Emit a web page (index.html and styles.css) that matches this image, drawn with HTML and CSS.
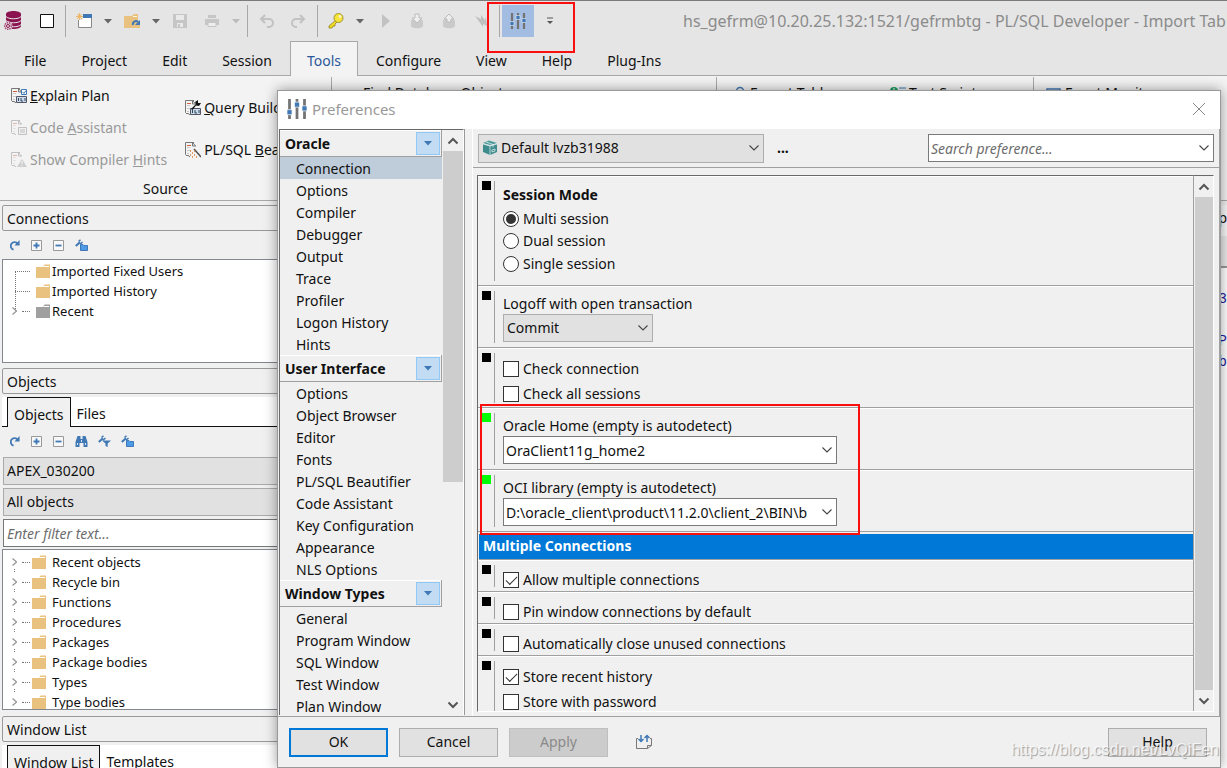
FILE: index.html
```html
<!DOCTYPE html>
<html lang="en">
<head>
<meta charset="utf-8">
<title>PL/SQL Developer - Preferences</title>
<link rel="stylesheet" href="styles.css">
</head>
<body>
<svg class="defs" aria-hidden="true">
  <symbol id="chev" viewBox="0 0 12 8"><path d="M1.500 1.500L6 6l4.500-4.500" fill="none" stroke="#444" stroke-width="1.100"/></symbol>
  <symbol id="up" viewBox="0 0 12 8"><path d="M1.500 6.500L6 2l4.500 4.500" fill="none" stroke="#555" stroke-width="2"/></symbol>
  <symbol id="down" viewBox="0 0 12 8"><path d="M1.500 1.500L6 6l4.500-4.500" fill="none" stroke="#555" stroke-width="2"/></symbol>
  <symbol id="tri" viewBox="0 0 8 5"><path d="M0 0h8L4 4.500z" fill="currentColor"/></symbol>
  <symbol id="exp" viewBox="0 0 5 20"><path d="M.5 6.500L4.500 10l-4 3.500" fill="none" stroke="#999" stroke-width="1.300"/><path d="M2 17h1v1H2zM2 19h1v1H2z" fill="#777"/></symbol>
  <symbol id="folder" viewBox="0 0 14 14"><path d="M0 3h7l1.500-2.500H14V14H0z" fill="currentColor"/><path d="M7.500 2.500H13" stroke="#fff" fill="none"/></symbol>
  <symbol id="refresh" viewBox="0 0 12 12"><path d="M5 10.500A4.200 4.200 0 1 1 9.500 4" fill="none" stroke="#3f78b4" stroke-width="2"/><path d="M11.500 0v6H6z" fill="#3f78b4"/></symbol>
  <symbol id="plus" viewBox="0 0 11 11"><path d="M.5.5h10v10H.5z" fill="#f8f8f8" stroke="#999"/><path d="M2.500 5.500h6M5.500 2.500v6" stroke="#3f78b4" stroke-width="1.800"/></symbol>
  <symbol id="minus" viewBox="0 0 11 11"><path d="M.5.5h10v10H.5z" fill="#f8f8f8" stroke="#999"/><path d="M2.500 5.500h6" stroke="#3f78b4" stroke-width="1.800"/></symbol>
  <symbol id="wfolder" viewBox="0 0 13 12"><path d="M.8 7L5 3.200" stroke="#3f78b4" stroke-width="2"/><path d="M3.500 2.500L5.500.7M7.500 3L5 5.200" stroke="#3f78b4" stroke-width="1.500"/><path d="M5.500 5.500h2.500l1 1h3.500v5h-7z" fill="#4d9be6" stroke="#3f78b4"/></symbol>
  <symbol id="wfilter" viewBox="0 0 13 12"><path d="M.8 7L5 3.200" stroke="#3f78b4" stroke-width="2"/><path d="M3.500 2.500L5.500.7M7.500 3L5 5.200" stroke="#3f78b4" stroke-width="1.500"/><path d="M4 5.500h9L9.700 8.500V12L7.500 11V8.500z" fill="#3f78b4"/></symbol>
  <symbol id="binoc" viewBox="0 0 12 12"><path d="M2 1h3v3h2V1h3l2 6v5H8V8H4v4H0V7z" fill="#3f78b4"/><path d="M2 8v2M10 8v2M6 5v2" stroke="#dbe7f3"/></symbol>
  <symbol id="sliders" viewBox="0 0 16 16"><path d="M2 0v16M8 0v16M14 0v16" stroke="#737373" stroke-width="2.200"/><path d="M0 8.500h4v4H0zM6 2.500h4v4H6zM12 5.500h4v4h-4z" fill="#3f78b4" stroke="#eef3f8" stroke-width=".6"/></symbol>
  <symbol id="doc" viewBox="0 0 16 16"><path d="M9 .5H.5v12L2 14l1-1 1 1.500h1M7.500.5l3 3.500M7.500.5V4H11" fill="none" stroke="#777"/><path d="M2 5.500h3M2 8.500h3M2 11.500h2" stroke="#c8c8c8"/><path d="M2 3.500h4" stroke="#d06040"/></symbol>
</svg>

<div class="app">
  <header class="quickbar">
    <svg class="i18" viewBox="0 0 18 20"><path d="M3 3c0-4 15-4 15 0v12c0 4-15 4-15 0z" fill="#8b1450"/><path d="M3 5.500c2 3 13 3 15 0M3 9.500c2 3 13 3 15 0M3 13.500c2 3 13 3 15 0" stroke="#e4e4e4" fill="none"/><circle cx="5" cy="15" r="4.500" fill="#e4e4e4"/><circle cx="5" cy="15" r="3.300" fill="none" stroke="#a84877" stroke-width="1.500" stroke-dasharray="1.500 .8"/><circle cx="5" cy="15" r="1.500" fill="none" stroke="#8b1450"/></svg>
    <svg class="i14 square" viewBox="0 0 14 14"><path d="M.5.5h13v13H.5z" fill="#fff" stroke="#111"/></svg>
    <i class="vsep"></i>
    <svg class="i16" viewBox="0 0 16 16"><path d="M2.500 2.500h13v12h-13z" fill="#fff" stroke="#888"/><path d="M7 1h9v4H7z" fill="#3f78b4"/><path d="M0 0h7v7H0z" fill="#e5e5e5"/><path d="M3.500 0v7M0 3.500h7M1 1l5 5M6 1L1 6" stroke="#e9b765"/></svg>
    <svg class="tri dk" viewBox="0 0 8 5"><use href="#tri"/></svg>
    <svg class="i16" viewBox="0 0 16 16"><path d="M0 3h8l2-2h4v14H0z" fill="#e9c27f"/><path d="M9 3.500h4" stroke="#fff4dd"/><path d="M8 8h8v7H8z" fill="#e9c27f"/><path d="M9 12a3 3 0 0 1 5-3" stroke="#3f78b4" stroke-width="2" fill="none"/><path d="M16 7v5h-5z" fill="#3f78b4"/></svg>
    <svg class="tri dk" viewBox="0 0 8 5"><use href="#tri"/></svg>
    <svg class="i16" viewBox="0 0 16 16"><path d="M1 1h14v14H1z" fill="#c6c6c6"/><path d="M4 2h8v5H4zM5 10h6v4H5z" fill="#e9e9e9"/><path d="M6 11h2v3H6z" fill="#c6c6c6"/></svg>
    <svg class="i16" viewBox="0 0 16 16"><path d="M4 2h8v3H4zM1 6h14v6H1z" fill="#c6c6c6"/><path d="M4 9.500h8v4H4z" fill="#eee" stroke="#c6c6c6"/></svg>
    <svg class="tri lt" viewBox="0 0 8 5"><use href="#tri"/></svg>
    <i class="vsep"></i>
    <svg class="i16" viewBox="0 0 16 16"><path d="M9 14h2a4 4 0 0 0 0-8H4M7 2L3 6l4 4" fill="none" stroke="#c2c2c2" stroke-width="2"/></svg>
    <svg class="i16" viewBox="0 0 16 16"><path d="M7 14H6a4 4 0 0 1 0-8h7M10 2l4 4-4 4" fill="none" stroke="#c2c2c2" stroke-width="2"/></svg>
    <i class="vsep"></i>
    <svg class="i16" viewBox="0 0 16 16"><path d="M8 7L1 13v2h3l1-2h2v-2l2-2" fill="#f2dc20" stroke="#8d8120" stroke-width=".8"/><circle cx="10.500" cy="5" r="4.500" fill="#f7e53a" stroke="#8d8120" stroke-width=".8"/><circle cx="12" cy="3.500" r="1.400" fill="#f6f3d0"/></svg>
    <svg class="tri dk" viewBox="0 0 8 5"><use href="#tri"/></svg>
    <svg class="i16" viewBox="0 0 16 16"><path d="M6 1l8 7-8 7z" fill="#c2c2c2"/></svg>
    <svg class="i16" viewBox="0 0 16 16"><path d="M3 8c0-3 12-3 12 0v5c0 3-12 3-12 0z" fill="#cacaca"/><path d="M7 1h4v4h3l-5 5-5-5h3z" fill="#eee" stroke="#bbb"/></svg>
    <svg class="i16" viewBox="0 0 16 16"><path d="M3 8c0-3 12-3 12 0v5c0 3-12 3-12 0z" fill="#cacaca"/><path d="M7 9h4V6h3L9 1 4 6h3z" fill="#eee" stroke="#bbb"/></svg>
    <svg class="i16" viewBox="0 0 16 16"><path d="M3 3l6 3V2l4 5 1-3 1 9-4-2v3z" fill="#c0c0c0"/></svg>
    <i class="vsep wide"></i>
    <button class="prefbtn" aria-label="Preferences"><svg class="i16"><use href="#sliders"/></svg></button>
    <svg class="i8" viewBox="0 0 8 8"><path d="M1 1h6" stroke="#555"/><path d="M1 4h6L4 7z" fill="#555"/></svg>
    <h1 class="wintitle">hs_gefrm@10.20.25.132:1521/gefrmbtg - PL/SQL Developer - Import Tables</h1>
    <div class="mark mark-top"></div>
  </header>

  <nav class="tabs">
    <button>File</button><button>Project</button><button>Edit</button><button>Session</button><button class="on">Tools</button><button>Configure</button><button>View</button><button>Help</button><button>Plug-Ins</button>
  </nav>

  <section class="ribbon">
    <div class="rgroup source">
      <div class="rcols">
        <div class="rcol">
          <button><svg class="i16"><use href="#doc"/><path d="M10.500 1.500h5v5h-5z" fill="#fff" stroke="#3f78b4"/><path d="M11.500 4l1.500 1.500 2-3" fill="none" stroke="#3f78b4"/><path d="M5.500 8.500h10v6h-10z" fill="#c9dcee" stroke="#556"/><path d="M7.500 10v3M10 10v3h2M14 10v3" stroke="#345" fill="none"/></svg><span><u>E</u>xplain Plan</span></button>
          <button disabled><svg class="i16"><use href="#doc"/><path d="M7.500 7.500h8v7h-8z" fill="#eee" stroke="#777"/><path d="M9 10h5M9 12h5" stroke="#777"/></svg><span>Code <u>A</u>ssistant</span></button>
          <button disabled><svg class="i16"><use href="#doc"/><path d="M11 7l5 8H6z" fill="#999"/><path d="M11 9v3M11 13v1" stroke="#fff"/></svg><span>Show Compiler <u>H</u>ints</span></button>
        </div>
        <div class="rcol two">
          <button><svg class="i16"><use href="#doc"/><path d="M5.500 8.500h10v6h-10z" fill="#c9dcee" stroke="#556"/><path d="M7.500 10v3M10 10v3h2M14 10v3" stroke="#345" fill="none"/><path d="M6 9l5-5-1-2 3-2v3h3l-2 3-3-.5L7.500 10z" fill="#111"/></svg><span><u>Q</u>uery Builder</span></button>
          <button><svg class="i16"><use href="#doc"/><path d="M9 7l7 8" stroke="#555" stroke-width="1.500"/><path d="M5 13h1M7 11h1M7 15h1M9 13h1M11 15h1M5 9h1M9 9h1" stroke="#e07b2a" stroke-width="1.500"/></svg><span>PL/SQL <u>B</u>eautifier</span></button>
        </div>
      </div>
      <div class="rname">Source</div>
    </div>
    <div class="rgroup find"><button>Find Database Objects</button></div>
    <div class="rgroup tabl">
      <button><svg class="i16" viewBox="0 0 16 16"><circle cx="9" cy="6" r="3.500" fill="none" stroke="#3f78b4" stroke-width="1.500"/></svg><span>Export Tables</span></button>
      <button class="rep"><svg class="i16" viewBox="0 0 16 16"><circle cx="4" cy="6" r="4" fill="#1f9a60"/><path d="M4 3v6" stroke="#fff"/><path d="M9 3h7M9 6h7" stroke="#3f78b4"/></svg><span>Test Scripts</span></button>
    </div>
    <div class="rgroup mon"><button><svg class="i16" viewBox="0 0 16 16"><path d="M1 4h13v9H1z" fill="#fff" stroke="#3f78b4" stroke-width="1.500"/></svg><span>Event Monitor</span></button></div>
  </section>

  <main class="work">
    <aside class="side">
      <h2 class="phead">Connections</h2>
      <div class="ptools">
        <svg class="i11" viewBox="0 0 12 12"><use href="#refresh"/></svg><svg class="i11"><use href="#plus"/></svg><svg class="i11"><use href="#minus"/></svg><svg class="i13"><use href="#wfolder"/></svg>
      </div>
      <ul class="tree conn">
        <li><i class="dots"></i><svg class="i14 fo"><use href="#folder"/></svg>Imported Fixed Users</li>
        <li><i class="dots"></i><svg class="i14 fo"><use href="#folder"/></svg>Imported History</li>
        <li><svg class="exp1" viewBox="0 0 5 8"><path d="M.5.5L4.500 4l-4 3.500" fill="none" stroke="#999" stroke-width="1.300"/></svg><i class="dots s"></i><svg class="i14 gr"><use href="#folder"/></svg>Recent</li>
      </ul>
      <h2 class="phead">Objects</h2>
      <div class="ptabs"><button class="on">Objects</button><button>Files</button></div>
      <div class="ptools">
        <svg class="i11" viewBox="0 0 12 12"><use href="#refresh"/></svg><svg class="i11"><use href="#plus"/></svg><svg class="i11"><use href="#minus"/></svg><svg class="i13"><use href="#binoc"/></svg><svg class="i13 nar"><use href="#wfilter"/></svg><svg class="i13 nar"><use href="#wfolder"/></svg>
      </div>
      <div class="pform">
        <select aria-label="Schema"><option>APEX_030200</option></select>
        <select aria-label="Object filter"><option>All objects</option></select>
        <input type="text" placeholder="Enter filter text..." aria-label="Filter">
      </div>
      <ul class="tree objs">
        <li><svg class="exp"><use href="#exp"/></svg><i class="dots s"></i><svg class="i14 fo"><use href="#folder"/></svg>Recent objects</li>
        <li><svg class="exp"><use href="#exp"/></svg><i class="dots s"></i><svg class="i14 fo"><use href="#folder"/></svg>Recycle bin</li>
        <li><svg class="exp"><use href="#exp"/></svg><i class="dots s"></i><svg class="i14 fo"><use href="#folder"/></svg>Functions</li>
        <li><svg class="exp"><use href="#exp"/></svg><i class="dots s"></i><svg class="i14 fo"><use href="#folder"/></svg>Procedures</li>
        <li><svg class="exp"><use href="#exp"/></svg><i class="dots s"></i><svg class="i14 fo"><use href="#folder"/></svg>Packages</li>
        <li><svg class="exp"><use href="#exp"/></svg><i class="dots s"></i><svg class="i14 fo"><use href="#folder"/></svg>Package bodies</li>
        <li><svg class="exp"><use href="#exp"/></svg><i class="dots s"></i><svg class="i14 fo"><use href="#folder"/></svg>Types</li>
        <li><svg class="exp"><use href="#exp"/></svg><i class="dots s"></i><svg class="i14 fo"><use href="#folder"/></svg>Type bodies</li>
      </ul>
      <h2 class="phead">Window List</h2>
      <div class="ptabs"><button class="on">Window List</button><button>Templates</button></div>
    </aside>
    <div class="editor">
      <div class="ehead">p</div>
      <div class="ebar"></div>
      <pre class="code">3

P
b</pre>
    </div>
  </main>
</div>

<div class="dialog" role="dialog" aria-labelledby="dlg-title">
  <div class="dtitle">
    <svg class="i20" viewBox="0 0 16 16"><use href="#sliders"/></svg>
    <h2 id="dlg-title">Preferences</h2>
    <button class="close" aria-label="Close"><svg viewBox="0 0 12 12"><path d="M0 0l12 12M12 0L0 12" stroke="#888" fill="none"/></svg></button>
  </div>
  <div class="dbody">
    <div class="navwrap">
      <div class="navlist">
        <h3>Oracle<button aria-label="Oracle menu"><svg class="tri" viewBox="0 0 8 5"><use href="#tri"/></svg></button></h3>
        <ul><li class="on">Connection</li><li>Options</li><li>Compiler</li><li>Debugger</li><li>Output</li><li>Trace</li><li>Profiler</li><li>Logon History</li><li>Hints</li></ul>
        <h3>User Interface<button aria-label="User Interface menu"><svg class="tri" viewBox="0 0 8 5"><use href="#tri"/></svg></button></h3>
        <ul><li>Options</li><li>Object Browser</li><li>Editor</li><li>Fonts</li><li>PL/SQL Beautifier</li><li>Code Assistant</li><li>Key Configuration</li><li>Appearance</li><li>NLS Options</li></ul>
        <h3>Window Types<button aria-label="Window Types menu"><svg class="tri" viewBox="0 0 8 5"><use href="#tri"/></svg></button></h3>
        <ul><li>General</li><li>Program Window</li><li>SQL Window</li><li>Test Window</li><li>Plan Window</li></ul>
      </div>
      <div class="sbar navbar"><svg><use href="#up"/></svg><div class="track"><div class="thumb"></div></div><svg><use href="#down"/></svg></div>
    </div>
    <div class="content">
      <div class="ctop">
        <div class="combo grey prof">
          <svg class="cube" viewBox="0 0 16 16"><path d="M1 4l7 2v9l-7-3zM15 4L8 6v9l7-3z" fill="#3d8b8d"/><path d="M1 3l6-2.500L15 3 8 5z" fill="#4c9a9b"/><path d="M4 2l7 2.500v3M1 4l7 2 7-2M8 6v9M10 10l3-1v2l-3 1z" stroke="#d7eaea" stroke-width=".8" fill="none"/></svg>
          <select aria-label="Preference set"><option>Default lvzb31988</option></select><svg class="chev"><use href="#chev"/></svg>
        </div>
        <button class="more" aria-label="More">...</button>
        <div class="combo search"><input type="text" placeholder="Search preference..." aria-label="Search preference"><svg class="chev"><use href="#chev"/></svg></div>
      </div>
      <div class="cbox">
        <div class="sections">
          <section class="sec"><i class="dot"></i><fieldset class="radios"><legend>Session Mode</legend>
            <label><input type="radio" name="m" checked>Multi session</label><label><input type="radio" name="m">Dual session</label><label><input type="radio" name="m">Single session</label></fieldset></section>
          <section class="sec"><i class="dot"></i><div class="field"><label for="logoff">Logoff with open transaction</label><div class="combo grey short"><select id="logoff"><option>Commit</option></select><svg class="chev"><use href="#chev"/></svg></div></div></section>
          <section class="sec"><i class="dot"></i><div class="checks"><label><input type="checkbox">Check connection</label><label><input type="checkbox">Check all sessions</label></div></section>
          <div class="marked">
            <section class="sec"><i class="dot green"></i><div class="field"><label for="home">Oracle Home (empty is autodetect)</label><div class="combo"><input id="home" type="text" value="OraClient11g_home2"><svg class="chev"><use href="#chev"/></svg></div></div></section>
            <section class="sec"><i class="dot green"></i><div class="field"><label for="oci">OCI library (empty is autodetect)</label><div class="combo"><input id="oci" type="text" value="D:\oracle_client\product\11.2.0\client_2\BIN\b"><svg class="chev"><use href="#chev"/></svg></div></div></section>
            <div class="mark mark-oci"></div>
          </div>
          <h3 class="band">Multiple Connections</h3>
          <section class="sec"><i class="dot"></i><div class="checks one"><label><input type="checkbox" checked>Allow multiple connections</label></div></section>
          <section class="sec"><i class="dot"></i><div class="checks one"><label><input type="checkbox">Pin window connections by default</label></div></section>
          <section class="sec"><i class="dot"></i><div class="checks one"><label><input type="checkbox">Automatically close unused connections</label></div></section>
          <section class="sec"><i class="dot"></i><div class="checks"><label><input type="checkbox" checked>Store recent history</label><label><input type="checkbox">Store with password</label></div></section>
        </div>
        <div class="sbar"><svg><use href="#up"/></svg><div class="track"><div class="thumb"></div></div><svg><use href="#down"/></svg></div>
      </div>
    </div>
  </div>
  <div class="dfoot">
    <button class="ok">OK</button><button>Cancel</button><button disabled>Apply</button>
    <svg class="i16" viewBox="0 0 16 16"><path d="M2 4.500H.5v10h11l4-3v-7H14M11.500 14.500v-3h4" fill="none" stroke="#777"/><path d="M5 1v6M2.500 5L5 7.500 7.500 5M11 8V2M8.500 4L11 1.500 13.500 4" fill="none" stroke="#3f78b4" stroke-width="1.500"/></svg>
    <button class="help">Help</button>
  </div>
</div>
<div class="watermark">https://blog.csdn.net/LvQiFen</div>
</body>
</html>
```
FILE: styles.css
```css
* { box-sizing: border-box; }
html, body { height: 100%; }
body {
  margin: 0;
  overflow: hidden;
  position: relative;
  font: 14px/20px "Noto Sans", "Open Sans", sans-serif;
  color: #111;
  background: #f0f0f0;
}
button, input, select { font: inherit; color: inherit; margin: 0; border-radius: 0; }
button { background: none; border: 0; padding: 0; }
h1, h2, h3, ul, pre, fieldset { margin: 0; padding: 0; font: inherit; border: 0; }
ul { list-style: none; }
svg { flex: none; display: block; }
.defs { position: absolute; width: 0; height: 0; }
.i8 { width: 8px; height: 8px; }
.i11 { width: 11px; height: 11px; }
.i13 { width: 13px; height: 12px; }
.i14 { width: 14px; height: 14px; }
.i16 { width: 16px; height: 16px; }
.i18 { width: 18px; height: 20px; }
.i20 { width: 20px; height: 20px; }
.tri { width: 8px; height: 5px; }
.dk { color: #666; margin: 0 -4px; }
.lt { color: #bbb; margin: 0 -4px; }

.app { height: 100%; display: flex; flex-direction: column; }
.quickbar {
  position: relative;
  flex: none;
  display: flex;
  align-items: center;
  gap: 16px;
  height: 41px;
  padding-left: 3px;
  border-top: 1px solid #7d7a7c;
  background: #e5e5e5;
}
.square { margin-left: 3px; }
.vsep { flex: none; width: 1px; height: 32px; background: #a8a8a8; margin: 0 -6px 0 -5px; }
.vsep.wide { margin-right: -14px; }
.prefbtn { flex: none; display: grid; place-items: center; width: 32px; height: 32px; background: #a3bce2; margin-right: -4px; }
.wintitle { flex: 1; min-width: 0; overflow: hidden; white-space: nowrap; margin-left: 113px; font-size: 16px; color: #8b8b8b; }
.mark { position: absolute; border: 2px solid #fa0f0f; pointer-events: none; z-index: 3; }
.mark-top { left: 487px; top: 1px; width: 88px; height: 51px; }

.tabs { flex: none; display: flex; gap: 1px; height: 35px; padding-left: 7px; background: #e5e5e5; border-bottom: 1px solid #a8a8a8; }
.tabs button { padding: 5px 17px 0; }
.tabs .on { color: #2b579a; background: #f3f3f3; border: 1px solid #a8a8a8; border-bottom: 0; padding: 4px 16px 0; margin-bottom: -1px; }

.ribbon { flex: none; display: flex; height: 125px; background: #f3f3f3; border-bottom: 1px solid #a8a8a8; white-space: nowrap; overflow: hidden; padding-top: 1px; }
.rgroup { border-right: 1px solid #a8a8a8; padding-top: 5px; flex: none; }
.rgroup button { display: flex; align-items: center; gap: 3px; height: 22px; }
.rgroup button:disabled { color: #999; }
.rgroup button:disabled svg { opacity: .4; }
.source { width: 332px; padding-top: 8px; }
.rcols { display: flex; height: 92px; padding-left: 11px; gap: 18px; }
.rcol { display: flex; flex-direction: column; gap: 10px; }
.two { gap: 20px; padding-top: 12px; }
.rname { text-align: center; padding-top: 2px; }
.find { width: 385px; padding-left: 31px; }
.tabl { width: 317px; padding-left: 14px; display: flex; }
.tabl .rep { margin-left: 52px; }
.mon { padding-left: 12px; border-right: 0; }

.work { flex: 1; min-height: 0; display: flex; padding-top: 4px; }
.side { flex: none; width: 290px; display: flex; flex-direction: column; padding-left: 2px; }
.phead { flex: none; height: 26px; border: 1px solid #999; border-radius: 2px; padding: 3px 4px 0; }
.ptools { flex: none; height: 28px; display: flex; align-items: center; gap: 11px; padding-left: 7px; }
.ptools .nar { margin-left: -1px; }
.tree { background: #fff; border: 1px solid #828790; font-size: 13px; overflow: hidden; }
.tree li { display: flex; align-items: center; height: 20px; padding-left: 9px; }
.conn { flex: none; height: 104px; margin-bottom: 5px; padding-top: 1px; }
.conn .i14 { margin-right: 2px; }
.dots { flex: none; width: 15px; height: 20px; margin: 20px 6px 0 3px; border-top: 1px dotted #777; border-left: 1px dotted #777; }
.dots.s { width: 8px; height: 1px; border-left: 0; margin: 0 2px 0 5px; }
.conn .dots.s { margin-right: 6px; }
.exp1 { width: 5px; height: 8px; }
.exp { width: 5px; height: 20px; }
.fo { color: #e9c27f; }
.gr { color: #a0a0a0; }
.objs { flex: none; height: 161px; margin: 2px 0 6px; padding-top: 2px; }
.objs .i14 { margin-right: 6px; }
.ptabs { flex: none; display: flex; height: 30px; margin-top: 3px; padding-left: 5px; background: #fff; border-bottom: 1px solid #111; }
.ptabs button { padding: 4px 6px 0; }
.ptabs .on { background: #f0f0f0; border: 1px solid #111; border-bottom: 0; margin-bottom: -1px; }
.pform { flex: none; display: flex; flex-direction: column; gap: 3px; padding: 2px 0 0 1px; }
.pform select, .pform input { height: 28px; appearance: none; border: 1px solid #aaa; background: #e1e1e1; padding: 0 3px; width: 100%; }
.pform input { background: #fff; border-color: #777; }
::placeholder { font-style: italic; color: #6d6d6d; opacity: 1; }

.editor { flex: 1; min-width: 0; text-align: right; overflow: hidden; }
.ehead { height: 31px; padding: 3px 0; background: #f8f8f8; }
.ebar { height: 32px; background: #e9e9e9; border-bottom: 2px solid #999; }
.code { padding-top: 21px; height: 500px; background: #fff; font: 14px/21px "Liberation Mono", monospace; color: #1b1b9a; }

.dialog {
  position: absolute;
  left: 277px;
  right: 6px;
  top: 90px;
  bottom: 0;
  display: flex;
  flex-direction: column;
  background: #f0f0f0;
  border: 1px solid #999;
  box-shadow: 0 0 12px rgba(0, 0, 0, .4);
}
.dtitle { flex: none; height: 38px; display: flex; align-items: center; gap: 5px; padding: 0 15px 2px 9px; background: #fff; }
.dtitle h2 { flex: 1; font-size: 15px; color: #999; }
.close svg { width: 12px; height: 12px; }
.dbody { flex: 1; min-height: 0; display: flex; gap: 7px; border-bottom: 1px solid #a0a0a0; }
.navwrap { flex: none; width: 187px; display: flex; margin-bottom: 1px; padding-left: 1px; border-right: 1px solid #999; }
.navlist { flex: 1; overflow: hidden; border-top: 1px solid #696969; border-left: 1px solid #696969; }
.navlist h3 { display: flex; align-items: center; justify-content: space-between; height: 27px; padding: 1px 1px 0 5px; font-weight: 700; border: 1px solid #a0a0a0; border-width: 0 1px 1px 0; box-shadow: inset 0 1px #fff; }
.navlist h3 button { display: grid; place-items: center; width: 24px; height: 23px; background: #c1dcf3; border: 1px solid #90c8f6; color: #3f78b4; }
.navlist li { height: 22px; line-height: 24px; padding-left: 16px; }
.navlist .on { background: #bfcddb; }
.sbar { flex: none; width: 20px; display: flex; flex-direction: column; align-items: center; border-top: 1px solid #696969; border-right: 1px solid #fff; }
.sbar svg { width: 12px; height: 8px; margin: 7px 0 6px; }
.track { flex: 1; align-self: stretch; padding-left: 1px; }
.thumb { background: #cdcdcd; height: 100%; }
.navbar .thumb { height: 61%; }
.navbar { width: 22px; }

.content { flex: 1; min-width: 0; display: flex; flex-direction: column; border-left: 1px solid #fff; border-right: 1px solid #a0a0a0; }
.ctop { flex: none; display: flex; align-items: center; height: 39px; padding: 0 5px; border-bottom: 1px solid #a0a0a0; }
.combo { display: grid; align-items: center; width: 334px; }
.combo > * { grid-area: 1 / 1; }
.combo select, .combo input { appearance: none; width: 100%; height: 28px; border: 1px solid #7a7a7a; background: #fff; padding: 0 24px 0 2px; }
.combo.grey select { background: #e1e1e1; border-color: #adadad; padding-left: 3px; }
.chev { width: 12px; height: 8px; justify-self: end; margin-right: 4px; pointer-events: none; }
.cube { width: 16px; height: 16px; margin-left: 4px; z-index: 1; }
.combo.prof { width: 286px; }
.combo.prof select { padding-left: 22px; height: 29px; }
.combo.short { width: 150px; }
.more { font-weight: 700; margin-left: 13px; }
.combo.search { width: 286px; margin-left: auto; }
.cbox { flex: 1; min-height: 0; display: flex; margin: 7px 5px 4px 4px; border-left: 1px solid #696969; border-bottom: 1px solid #fff; }
.sections { flex: 1; min-width: 0; overflow: hidden; border-top: 1px solid #696969; border-right: 1px solid #a0a0a0; }
.sec { display: flex; padding: 5px 0 4px 4px; border-bottom: 1px solid #a0a0a0; box-shadow: inset 0 1px #fff; }
.sec:last-child { border-bottom: 0; }
.dot { flex: none; width: 9px; height: 9px; background: #000; margin-right: 3px; }
.dot.green { background: #0f0; }
.sec > :last-child { border-left: 1px solid #a0a0a0; padding-left: 8px; }
.radios { padding-top: 3px; height: 100px; }
.radios legend { float: left; padding: 0; font-weight: 700; height: 24px; line-height: 22px; }
.radios label { clear: both; display: flex; align-items: center; height: 22px; gap: 4px; }
.radios label:last-child { height: 24px; }
.checks label { display: flex; align-items: center; gap: 4px; height: 25px; }
.checks { padding-top: 3px; height: 50px; }
.checks.one { padding-top: 2px; height: 22px; }
.field { height: 52px; }
.field label { display: block; padding-top: 3px; }
input[type="radio"], input[type="checkbox"] { appearance: none; flex: none; width: 16px; height: 16px; border: 1px solid #333; background: #fff; display: grid; place-items: center; }
input[type="radio"] { border-radius: 50%; }
input[type="radio"]:checked::before { content: ""; width: 10px; height: 10px; border-radius: 50%; background: #333; }
input[type="checkbox"]:checked::before { content: ""; width: 10px; height: 5px; border: solid #333; border-width: 0 0 1px 1px; transform: translateY(-1px) rotate(-45deg); }
.marked { position: relative; }
.mark-oci { left: 2px; top: -4px; width: 380px; height: 131px; }
.band { height: 26px; line-height: 24px; padding-left: 4px; margin: 2px 0 0 1px; font-weight: 700; color: #fff; background: #0078d7; border-bottom: 1px solid #a0a0a0; }

.dfoot { flex: none; display: flex; align-items: center; gap: 11px; height: 50px; padding: 0 13px 0 11px; }
.dfoot button { width: 99px; height: 29px; background: #e1e1e1; border: 1px solid #adadad; }
.dfoot .ok { border: 2px solid #0078d7; }
.dfoot button:disabled { background: #ccc; border-color: #bfbfbf; color: #8a8a8a; }
.dfoot svg { margin-left: 17px; }
.dfoot .help { margin-left: auto; }
.watermark { position: absolute; right: 8px; bottom: 8px; font: 16px/20px "Liberation Sans", sans-serif; color: rgba(255, 255, 255, .75); text-shadow: 1px 1px 1px rgba(0, 0, 0, .35); pointer-events: none; }
```
